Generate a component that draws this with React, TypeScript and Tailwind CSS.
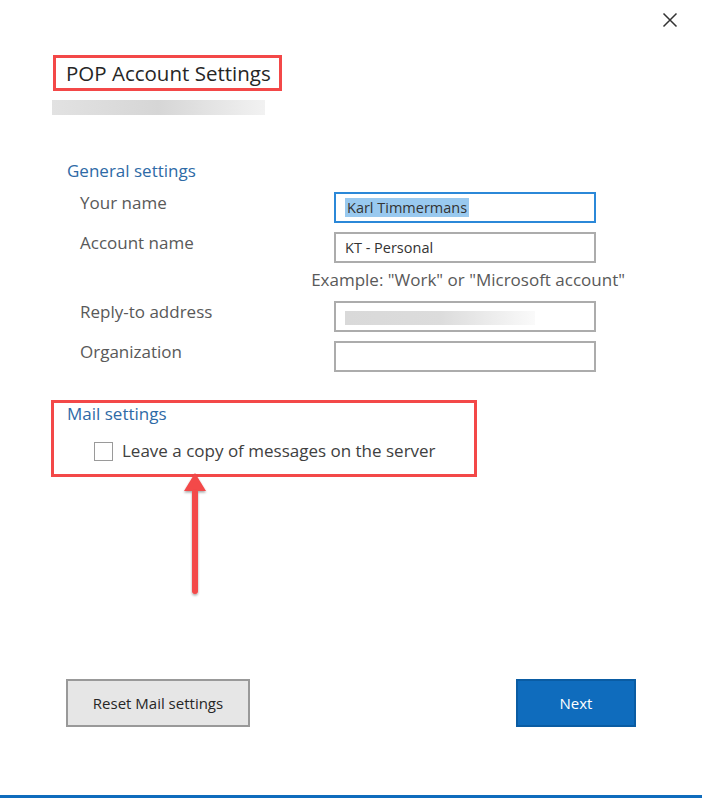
import React from 'react';

const font = { fontFamily: '"Open Sans", "Noto Sans", sans-serif' };

const Field: React.FC<{ label: string; children: React.ReactNode; focused?: boolean }> = ({ label, children, focused }) => (
  <div className="flex items-start h-[31px]">
    <div className="w-[334px] pl-[80px] text-[17px] text-[#595959] leading-[24px] -mt-[1px]">{label}</div>
    <div
      className={
        'w-[262px] h-[31px] border-2 flex items-center pl-[9px] text-[14.5px] text-[#333] ' +
        (focused ? 'border-[#2b88d8]' : 'border-[#acacac]')
      }
    >
      {children}
    </div>
  </div>
);

const App: React.FC = () => {
  return (
    <div className="w-[702px] h-[798px] bg-white relative flex flex-col border-b-[3px] border-[#0f6cbd] overflow-hidden" style={font}>
      <button className="absolute top-[12px] right-[24px] w-[16px] h-[16px] text-[#333]">
        <svg viewBox="0 0 16 16" className="w-[16px] h-[16px]" fill="none" stroke="currentColor" strokeWidth="1.5">
          <path d="M1.5 1.5 L14.5 14.5 M14.5 1.5 L1.5 14.5" />
        </svg>
      </button>

      <div className="mt-[55px] ml-[53px] w-[229px] h-[36px] border-[3px] border-[#f34848] flex items-center pl-[10px] text-[20.5px] text-[#262626] whitespace-nowrap">
        POP Account Settings
      </div>
      <div className="ml-[52px] mt-[9px] w-[213px] h-[15px] bg-gradient-to-r from-[#e2e2e2] via-[#d6d6d6] to-[#f2f2f2]" />

      <div className="ml-[67px] mt-[44px] text-[17px] leading-[24px] text-[#2e6aa6]">General settings</div>

      <div className="mt-[9px] flex flex-col">
        <Field label="Your name" focused>
          <span className="bg-[#99c9ef] px-[2px] leading-[19px]">Karl Timmermans</span>
        </Field>
        <div className="mt-[9px]">
          <Field label="Account name">KT - Personal</Field>
        </div>
        <div className="h-[38px] pt-[5px] leading-[24px] text-right pr-[77px] text-[17px] text-[#595959]">
          Example: "Work" or "Microsoft account"
        </div>
        <Field label="Reply-to address">
          <div className="w-[190px] h-[14px] mt-[2px] bg-gradient-to-r from-[#d9d9d9] via-[#dcdcdc] to-[#fafafa]" />
        </Field>
        <div className="mt-[9px]">
          <Field label="Organization">{''}</Field>
        </div>
      </div>

      <div className="mt-[28px] ml-[51px] w-[426px] h-[77px] border-[3px] border-[#f34848] flex flex-col">
        <div className="pl-[13px] pt-[1px] text-[17px] leading-[20px] text-[#2e6aa6]">Mail settings</div>
        <label className="flex items-center mt-[15px] ml-[40px] gap-[9px] text-[17px] leading-[24px] text-[#404040]">
          <span className="w-[19px] h-[19px] border border-[#9a9a9a] bg-white" />
          <span>Leave a copy of messages on the server</span>
        </label>
      </div>

      <svg className="absolute left-[178px] top-[470px]" width="36" height="132" viewBox="0 0 36 132">
        <defs>
          <filter id="sh" x="-50%" y="-10%" width="200%" height="130%">
            <feDropShadow dx="0" dy="1.5" stdDeviation="1.2" floodColor="#000" floodOpacity="0.35" />
          </filter>
        </defs>
        <g filter="url(#sh)" fill="#f34848">
          <path d="M17 3 L28 21 L6 21 Z" />
          <rect x="14" y="19" width="6" height="105" rx="3" />
        </g>
      </svg>

      <div className="mt-auto mb-[68px] flex justify-between pl-[66px] pr-[66px]">
        <button className="w-[184px] h-[48px] bg-[#e6e6e6] border-2 border-[#999] text-[15px] text-[#262626]">
          Reset Mail settings
        </button>
        <button className="w-[120px] h-[48px] bg-[#0f6cbd] border-2 border-[#0a5ca3] text-[15px] text-white">
          Next
        </button>
      </div>
    </div>
  );
};

export default App;
